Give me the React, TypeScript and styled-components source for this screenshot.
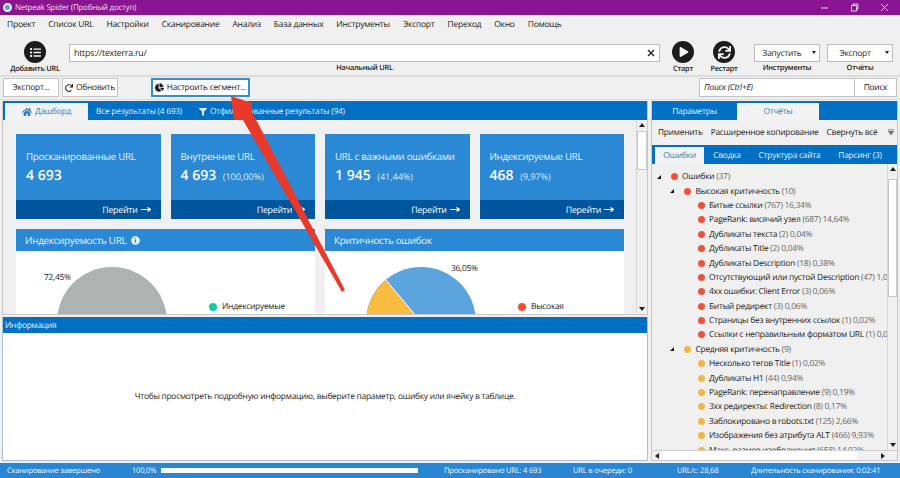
import React from "react";
import styled, { createGlobalStyle } from "styled-components";
import { FaChartPie, FaFilter, FaHome, FaInfoCircle, FaList, FaPlay, FaRedo, FaSync } from "react-icons/fa";

const Global = createGlobalStyle`
  html, body { margin: 0; padding: 0; }
  body {
    font-family: "Open Sans", "Noto Sans", sans-serif;
    font-size: 8.4px;
    letter-spacing: -0.25px;
    color: #222;
    text-rendering: geometricPrecision;
  }
  * { box-sizing: border-box; }
`;

const Page = styled.div`
  position: relative;
  width: 900px;
  height: 478px;
  overflow: hidden;
  background: #f0f0f0;
  display: flex;
  flex-direction: column;
`;

const TitleBar = styled.div`
  flex: 0 0 15px;
  background: #8a1590;
  color: #f0dff2;
  display: flex;
  align-items: center;
  padding-left: 3px;
  gap: 3px;
  font-size: 8px;
`;

const AppIcon = styled.span`
  width: 9px;
  height: 9px;
  border-radius: 50%;
  background: #4fa9cf;
  border: 2px solid #e8f6fb;
`;

const WindowButtons = styled.div`
  margin-left: auto;
  display: flex;
  align-items: center;
  gap: 21px;
  padding-right: 11px;
`;

const MenuBar = styled.div`
  flex: 0 0 19px;
  display: flex;
  align-items: center;
  gap: 13px;
  padding-left: 7px;
  font-size: 8.5px;
`;

const Toolbar = styled.div`
  flex: 0 0 42px;
  display: flex;
  padding-left: 11px;
  border-bottom: 2px solid #dcdcdc;
`;

const ToolColumn = styled.div<{ $width: number; $ml?: number }>`
  width: ${(p) => p.$width}px;
  margin-left: ${(p) => p.$ml ?? 0}px;
  display: flex;
  flex-direction: column;
  align-items: center;
`;

const RoundIcon = styled.div`
  width: 22px;
  height: 22px;
  margin-top: 7px;
  border-radius: 50%;
  background: #1c1c1c;
  color: #f5f5f5;
  display: flex;
  align-items: center;
  justify-content: center;
`;

const ToolLabel = styled.div`
  margin-top: 1px;
  font-size: 7.4px;
  font-weight: 600;
  line-height: 11px;
  white-space: nowrap;
`;

const UrlInput = styled.div`
  width: 100%;
  height: 18px;
  margin-top: 10px;
  background: #fff;
  border: 1px solid #bdbdbd;
  display: flex;
  align-items: center;
  justify-content: space-between;
  padding: 0 4px;
  font-size: 8.8px;
`;

const Select = styled.div`
  width: 100%;
  height: 18px;
  margin-top: 10px;
  background: #fff;
  border: 1px solid #bdbdbd;
  display: flex;
  align-items: center;
  justify-content: center;
  position: relative;
  padding-right: 10px;
  &::after {
    content: "";
    position: absolute;
    right: 3px;
    top: 6px;
    border: 2.5px solid transparent;
    border-top: 3px solid #222;
  }
`;

const SegmentRow = styled.div`
  flex: 0 0 23px;
  display: flex;
  align-items: center;
  padding: 0 3px 1px 3px;
  border-bottom: 1px solid #dcdcdc;
`;

const Button = styled.div<{ $width: number; $ml?: number; $active?: boolean }>`
  width: ${(p) => p.$width}px;
  height: 19px;
  margin-left: ${(p) => p.$ml ?? 0}px;
  background: #fff;
  border: ${(p) => (p.$active ? "2px solid #3a8bd0" : "1px solid #c4c4c4")};
  display: flex;
  align-items: center;
  justify-content: center;
  gap: 3px;
  white-space: nowrap;
`;

const SearchBox = styled.div`
  width: 155px;
  height: 19px;
  margin-left: auto;
  background: #fff;
  border: 1px solid #c4c4c4;
  border-right: 0;
  display: flex;
  align-items: center;
  padding-left: 4px;
  font-style: italic;
`;

const Main = styled.div`
  flex: 1;
  display: flex;
  min-height: 0;
  padding: 1px 2px 2px 2px;
  gap: 3px;
`;

const LeftColumn = styled.div`
  flex: 0 0 646px;
  display: flex;
  flex-direction: column;
  gap: 2px;
`;

const ResultsPanel = styled.div`
  flex: 0 0 214px;
  border: 1px solid #c8c8c8;
  border-top: 0;
  display: flex;
  flex-direction: column;
  min-height: 0;
  overflow: hidden;
`;

const TabBar = styled.div<{ $pl?: number }>`
  flex: 0 0 19px;
  background: #0070c5;
  display: flex;
  align-items: flex-end;
  padding-left: ${(p) => p.$pl ?? 2}px;
  color: #e4f0fa;
`;

const Tab = styled.div<{ $width?: number; $active?: boolean; $ml?: number }>`
  ${(p) => (p.$width ? `width: ${p.$width}px;` : "")}
  height: 17px;
  margin-left: ${(p) => p.$ml ?? 0}px;
  display: flex;
  align-items: center;
  justify-content: center;
  gap: 3px;
  white-space: nowrap;
  background: ${(p) => (p.$active ? "#f2f2f2" : "transparent")};
  color: ${(p) => (p.$active ? "#2d7fc4" : "#e4f0fa")};
`;

const DashBody = styled.div`
  flex: 1;
  display: flex;
  min-height: 0;
`;

const Dashboard = styled.div`
  flex: 1;
  padding: 14px 12px 0 13px;
  display: flex;
  flex-direction: column;
  gap: 10px;
  overflow: hidden;
`;

const CardGrid = styled.div`
  display: grid;
  grid-template-columns: repeat(4, 1fr);
  column-gap: 10px;
`;

const Card = styled.div`
  height: 85px;
  background: #2b88d4;
  color: #fff;
  display: flex;
  flex-direction: column;
`;

const CardBody = styled.div`
  flex: 1;
  padding: 15px 10px 0 10px;
`;

const CardTitle = styled.div`
  font-size: 9.7px;
  line-height: 15px;
  color: #e4f1fb;
  white-space: nowrap;
`;

const CardValue = styled.div`
  margin-top: 2px;
  font-size: 14px;
  font-weight: 600;
  letter-spacing: 0;
  line-height: 19px;
  white-space: nowrap;
  span {
    margin-left: 3px;
    font-size: 9.2px;
    font-weight: 400;
    letter-spacing: -0.1px;
    color: #d8e9f8;
  }
`;

const CardFooter = styled.div`
  flex: 0 0 19px;
  background: #00569c;
  display: flex;
  align-items: center;
  justify-content: flex-end;
  gap: 3px;
  padding-right: 10px;
  font-size: 8.8px;
`;

const ChartGrid = styled.div`
  display: grid;
  grid-template-columns: 1fr 1fr;
  column-gap: 10px;
`;

const ChartCard = styled.div`
  background: #fff;
  height: 120px;
`;

const ChartHeader = styled.div`
  height: 22px;
  background: #2b88d4;
  color: #eaf4fc;
  font-size: 9.8px;
  padding-left: 9px;
  display: flex;
  align-items: center;
  gap: 5px;
`;

const ChartBody = styled.div`
  position: relative;
  height: 98px;
`;

const PieSvg = styled.svg`
  position: absolute;
  left: 0;
  top: 0;
`;

const PieLabel = styled.div<{ $left: number; $top: number }>`
  position: absolute;
  left: ${(p) => p.$left}px;
  top: ${(p) => p.$top}px;
`;

const Legend = styled.div<{ $left: number }>`
  position: absolute;
  left: ${(p) => p.$left}px;
  top: 50px;
  display: flex;
  align-items: center;
  gap: 5px;
`;

const Dot = styled.span<{ $color: string; $size?: number }>`
  flex: none;
  width: ${(p) => p.$size ?? 7}px;
  height: ${(p) => p.$size ?? 7}px;
  border-radius: 50%;
  background: ${(p) => p.$color};
`;

const ScrollBar = styled.div<{ $width?: number }>`
  flex: 0 0 ${(p) => p.$width ?? 11}px;
  background: #f0f0f0;
  border-left: 1px solid #d8d8d8;
  display: flex;
  flex-direction: column;
  justify-content: space-between;
  align-items: center;
  position: relative;
`;

const Thumb = styled.div<{ $top: number; $height: number }>`
  position: absolute;
  top: ${(p) => p.$top}px;
  left: 0;
  right: 0;
  height: ${(p) => p.$height}px;
  background: #fff;
  border: 1px solid #c8c8c8;
`;

const ArrowUp = styled.span`
  margin-top: 3px;
  border: 3px solid transparent;
  border-bottom: 4px solid #222;
  border-top: 0;
`;

const ArrowDown = styled.span`
  margin-bottom: 3px;
  border: 3px solid transparent;
  border-top: 4px solid #222;
  border-bottom: 0;
`;

const InfoPanel = styled.div`
  flex: 1;
  min-height: 0;
  display: flex;
  flex-direction: column;
  background: #fff;
  border: 1px solid #a9bfd2;
  border-top: 0;
`;

const InfoHeader = styled.div`
  flex: 0 0 16px;
  background: #0070c5;
  color: #e4f0fa;
  padding-left: 2px;
  display: flex;
  align-items: center;
`;

const InfoBody = styled.div`
  flex: 1;
  display: flex;
  align-items: center;
  justify-content: center;
`;

const RightColumn = styled.div`
  flex: 1;
  display: flex;
  flex-direction: column;
  min-width: 0;
  border: 1px solid #c8c8c8;
  border-top: 0;
`;

const ActionBar = styled.div`
  flex: 0 0 25px;
  display: flex;
  align-items: center;
  gap: 8px;
  padding: 0 3px 0 6px;
  white-space: nowrap;
`;

const FunnelMark = styled.svg`
  margin-left: auto;
`;

const SubTabs = styled.div`
  flex: 0 0 19px;
  background: #0070c5;
  display: flex;
  align-items: flex-end;
  padding-left: 3px;
`;

const SubTab = styled.div<{ $width: number; $active?: boolean }>`
  width: ${(p) => p.$width}px;
  height: 17px;
  display: flex;
  align-items: center;
  justify-content: center;
  white-space: nowrap;
  background: ${(p) => (p.$active ? "#f2f2f2" : "transparent")};
  color: ${(p) => (p.$active ? "#2d7fc4" : "#e4f0fa")};
`;

const TreeArea = styled.div`
  flex: 1;
  min-height: 0;
  display: flex;
`;

const Tree = styled.div`
  flex: 1;
  min-width: 0;
  overflow: hidden;
  padding-top: 5.5px;
`;

const TreeRow = styled.div<{ $level: number }>`
  height: 14.4px;
  display: flex;
  align-items: center;
  gap: 4.5px;
  padding-left: ${(p) => 18.5 + p.$level * 13.5}px;
  white-space: nowrap;
  span {
    color: #666;
  }
`;

const Caret = styled.i`
  position: absolute;
  margin-left: -14px;
  border-left: 4px solid transparent;
  border-bottom: 4px solid #111;
`;

const HScroll = styled.div`
  flex: 0 0 10px;
  display: flex;
  justify-content: space-between;
  align-items: center;
  padding: 0 12px 0 3px;
  border-top: 1px solid #d0d0d0;
  background: linear-gradient(to right, #f0f0f0 10px, #fff 10px, #fff 205px, #f0f0f0 205px);
`;

const ArrowLeft = styled.span`
  border: 3px solid transparent;
  border-right: 4px solid #222;
  border-left: 0;
`;

const ArrowRightSmall = styled.span`
  border: 3px solid transparent;
  border-left: 4px solid #222;
  border-right: 0;
`;

const StatusBar = styled.div`
  flex: 0 0 15px;
  background: #2a86d3;
  color: #eef6fc;
  display: flex;
  align-items: center;
  padding-left: 7px;
  font-size: 7.6px;
  letter-spacing: -0.22px;
  white-space: nowrap;
`;

const StatusItem = styled.div<{ $width: number }>`
  flex: 0 0 ${(p) => p.$width}px;
`;

const Progress = styled.div`
  width: 257px;
  height: 5px;
  margin-right: 26px;
  background: #fff;
`;

const Overlay = styled.svg`
  position: absolute;
  left: 0;
  top: 0;
  pointer-events: none;
`;

const menu = ["Проект", "Список URL", "Настройки", "Сканирование", "Анализ", "База данных", "Инструменты", "Экспорт", "Переход", "Окно", "Помощь"];

const cards = [
  { title: "Просканированные URL", value: "4 693", pct: "" },
  { title: "Внутренние URL", value: "4 693", pct: "(100,00%)" },
  { title: "URL с важными ошибками", value: "1 945", pct: "(41,44%)" },
  { title: "Индексируемые URL", value: "468", pct: "(9,97%)" },
];

const RED = "#f0513a";
const AMBER = "#f4b642";

const tree: { level: number; color: string; name: string; count: string; caret?: boolean }[] = [
  { level: 0, color: RED, name: "Ошибки", count: "(37)", caret: true },
  { level: 1, color: RED, name: "Высокая критичность", count: "(10)", caret: true },
  { level: 2, color: RED, name: "Битые ссылки", count: "(767) 16,34%" },
  { level: 2, color: RED, name: "PageRank: висячий узел", count: "(687) 14,64%" },
  { level: 2, color: RED, name: "Дубликаты текста", count: "(2) 0,04%" },
  { level: 2, color: RED, name: "Дубликаты Title", count: "(2) 0,04%" },
  { level: 2, color: RED, name: "Дубликаты Description", count: "(18) 0,38%" },
  { level: 2, color: RED, name: "Отсутствующий или пустой Description", count: "(47) 1,00%" },
  { level: 2, color: RED, name: "4xx ошибки: Client Error", count: "(3) 0,06%" },
  { level: 2, color: RED, name: "Битый редирект", count: "(3) 0,06%" },
  { level: 2, color: RED, name: "Страницы без внутренних ссылок", count: "(1) 0,02%" },
  { level: 2, color: RED, name: "Ссылки с неправильным форматом URL", count: "(1) 0,02%" },
  { level: 1, color: AMBER, name: "Средняя критичность", count: "(9)", caret: true },
  { level: 2, color: AMBER, name: "Несколько тегов Title", count: "(1) 0,02%" },
  { level: 2, color: AMBER, name: "Дубликаты H1", count: "(44) 0,94%" },
  { level: 2, color: AMBER, name: "PageRank: перенаправление", count: "(9) 0,19%" },
  { level: 2, color: AMBER, name: "3xx редиректы: Redirection", count: "(8) 0,17%" },
  { level: 2, color: AMBER, name: "Заблокировано в robots.txt", count: "(125) 2,66%" },
  { level: 2, color: AMBER, name: "Изображения без атрибута ALT", count: "(466) 9,93%" },
  { level: 2, color: AMBER, name: "Макс. размер изображения", count: "(658) 14,02%" },
];

function LongArrow() {
  return (
    <svg width="10" height="7" viewBox="0 0 10 7">
      <path d="M0 3.5H9M6.5 1.5L9.5 3.5L6.5 5.5" fill="none" stroke="#fff" strokeWidth="1.2" />
    </svg>
  );
}

export default function App() {
  return (
    <Page>
      <Global />
      <TitleBar>
        <AppIcon />
        Netpeak Spider (Пробный доступ)
        <WindowButtons>
          <svg width="9" height="9" viewBox="0 0 9 9"><path d="M1 5H8" stroke="#e8d4ea" /></svg>
          <svg width="9" height="9" viewBox="0 0 9 9"><path d="M1.5 2.5H6.5V8H1.5ZM3 2.5V1H8V6H6.5" fill="none" stroke="#e8d4ea" /></svg>
          <svg width="9" height="9" viewBox="0 0 9 9"><path d="M1 1L8 8M8 1L1 8" stroke="#e8d4ea" /></svg>
        </WindowButtons>
      </TitleBar>
      <MenuBar>
        {menu.map((item) => (
          <div key={item}>{item}</div>
        ))}
      </MenuBar>
      <Toolbar>
        <ToolColumn $width={48}>
          <RoundIcon><FaList size={11} /></RoundIcon>
          <ToolLabel>Добавить URL</ToolLabel>
        </ToolColumn>
        <ToolColumn $width={591} $ml={10}>
          <UrlInput>
            https://texterra.ru/
            <svg width="8" height="8" viewBox="0 0 8 8"><path d="M1 1L7 7M7 1L1 7" stroke="#222" strokeWidth="1.4" /></svg>
          </UrlInput>
          <ToolLabel>Начальный URL</ToolLabel>
        </ToolColumn>
        <ToolColumn $width={30} $ml={8}>
          <RoundIcon><FaPlay size={10} style={{ marginLeft: 2 }} /></RoundIcon>
          <ToolLabel>Старт</ToolLabel>
        </ToolColumn>
        <ToolColumn $width={30} $ml={11}>
          <RoundIcon><FaSync size={13} /></RoundIcon>
          <ToolLabel>Рестарт</ToolLabel>
        </ToolColumn>
        <ToolColumn $width={66} $ml={15}>
          <Select>Запустить</Select>
          <ToolLabel>Инструменты</ToolLabel>
        </ToolColumn>
        <ToolColumn $width={66} $ml={7}>
          <Select>Экспорт</Select>
          <ToolLabel>Отчёты</ToolLabel>
        </ToolColumn>
      </Toolbar>
      <SegmentRow>
        <Button $width={56}>Экспорт...</Button>
        <Button $width={56} $ml={3}><FaRedo size={8} color="#222" />Обновить</Button>
        <Button $width={99} $ml={33} $active><FaChartPie size={9} color="#222" />Настроить сегмент...</Button>
        <SearchBox>Поиск (Ctrl+E)</SearchBox>
        <Button $width={43}>Поиск</Button>
      </SegmentRow>
      <Main>
        <LeftColumn>
          <ResultsPanel>
            <TabBar>
              <Tab $width={83} $active><FaHome size={10} />Дашборд</Tab>
              <Tab $ml={8}>Все результаты (4 693)</Tab>
              <Tab $ml={17}><FaFilter size={8} />Отфильтрованные результаты (94)</Tab>
            </TabBar>
            <DashBody>
              <Dashboard>
                <CardGrid>
                  {cards.map((card) => (
                    <Card key={card.title}>
                      <CardBody>
                        <CardTitle>{card.title}</CardTitle>
                        <CardValue>{card.value} {card.pct && <span>{card.pct}</span>}</CardValue>
                      </CardBody>
                      <CardFooter>Перейти <LongArrow /></CardFooter>
                    </Card>
                  ))}
                </CardGrid>
                <ChartGrid>
                  <ChartCard>
                    <ChartHeader>Индексируемость URL <FaInfoCircle size={9} /></ChartHeader>
                    <ChartBody>
                      <PieSvg width="299" height="98">
                        <circle cx="96" cy="71" r="55" fill="#adb3b0" />
                      </PieSvg>
                      <PieLabel $left={28} $top={21}>72,45%</PieLabel>
                      <Legend $left={193}><Dot $color="#14c99a" $size={8} />Индексируемые</Legend>
                    </ChartBody>
                  </ChartCard>
                  <ChartCard>
                    <ChartHeader>Критичность ошибок</ChartHeader>
                    <ChartBody>
                      <PieSvg width="299" height="98">
                        <circle cx="96" cy="71" r="55" fill="#5ba4de" />
                        <path d="M96 71L61 29A55 55 0 0 0 41 71Z" fill="#f9bb40" />
                        <path d="M96 71L61 29" stroke="#fff" />
                      </PieSvg>
                      <PieLabel $left={126} $top={12}>36,05%</PieLabel>
                      <Legend $left={193}><Dot $color={RED} $size={8} />Высокая</Legend>
                    </ChartBody>
                  </ChartCard>
                </ChartGrid>
              </Dashboard>
              <ScrollBar>
                <ArrowUp />
                <Thumb $top={11} $height={39} />
                <ArrowDown />
              </ScrollBar>
            </DashBody>
          </ResultsPanel>
          <InfoPanel>
            <InfoHeader>Информация</InfoHeader>
            <InfoBody>Чтобы просмотреть подробную информацию, выберите параметр, ошибку или ячейку в таблице.</InfoBody>
          </InfoPanel>
        </LeftColumn>
        <RightColumn>
          <TabBar $pl={0}>
            <Tab $width={85}>Параметры</Tab>
            <Tab $width={82} $active>Отчёты</Tab>
          </TabBar>
          <ActionBar>
            <div>Применить</div>
            <div>Расширенное копирование</div>
            <div>Свернуть всё</div>
            <FunnelMark width="6" height="7" viewBox="0 0 6 7"><path d="M0 0.5H6M0 2L3 6L6 2Z" stroke="#777" fill="#777" strokeWidth="0.6" /></FunnelMark>
          </ActionBar>
          <SubTabs>
            <SubTab $width={49} $active>Ошибки</SubTab>
            <SubTab $width={46}>Сводка</SubTab>
            <SubTab $width={79}>Структура сайта</SubTab>
            <SubTab $width={62}>Парсинг (3)</SubTab>
          </SubTabs>
          <TreeArea>
            <Tree>
              {tree.map((row) => (
                <TreeRow key={row.name} $level={row.level}>
                  {row.caret && <Caret />}
                  <Dot $color={row.color} />
                  <div>{row.name} <span>{row.count}</span></div>
                </TreeRow>
              ))}
            </Tree>
            <ScrollBar $width={10}>
              <ArrowUp />
              <Thumb $top={15} $height={118} />
              <ArrowDown />
            </ScrollBar>
          </TreeArea>
          <HScroll>
            <ArrowLeft />
            <ArrowRightSmall />
          </HScroll>
        </RightColumn>
      </Main>
      <StatusBar>
        <StatusItem $width={125}>Сканирование завершено</StatusItem>
        <StatusItem $width={29}>100,0%</StatusItem>
        <Progress />
        <StatusItem $width={129}>Просканировано URL: 4 693</StatusItem>
        <StatusItem $width={104}>URL в очереди: 0</StatusItem>
        <StatusItem $width={74}>URL/с: 28,68</StatusItem>
        <StatusItem $width={130}>Длительность сканирования: 0:02:41</StatusItem>
      </StatusBar>
      <Overlay width="900" height="478">
        <path d="M345 290L252 112L252 103L231 96L234 120L243 120L342 292Z" fill="#e8392b" />
      </Overlay>
    </Page>
  );
}
